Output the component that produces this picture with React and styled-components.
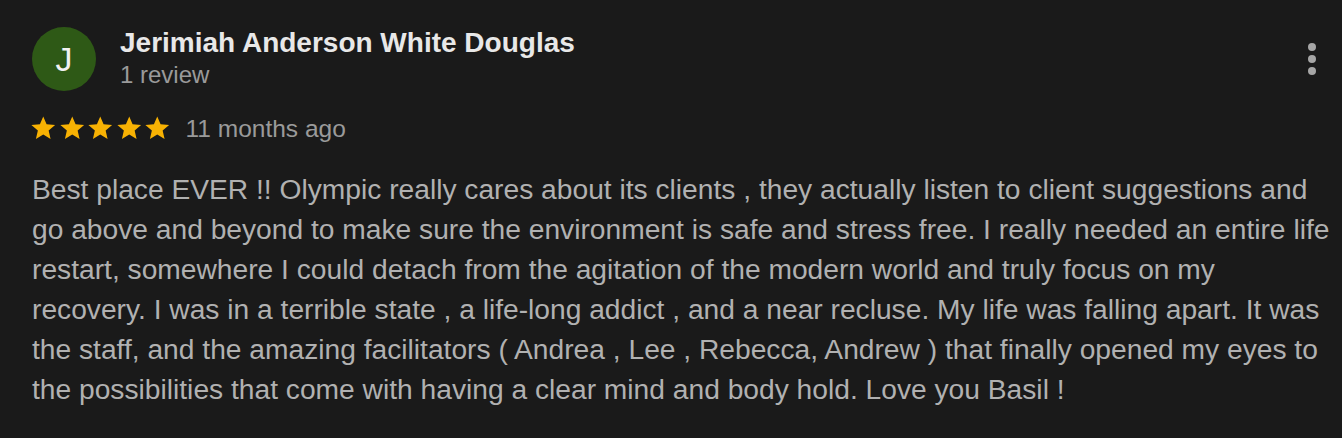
import React from "react";
import styled, { createGlobalStyle } from "styled-components";

const Global = createGlobalStyle`
  html, body { margin: 0; padding: 0; background: #1a1a1a; }
  body { font-family: "Liberation Sans", Arial, Helvetica, sans-serif; }
`;

const Card = styled.div`
  background: #1a1a1a;
  width: 1342px;
  height: 438px;
  box-sizing: border-box;
  padding: 27px 8px 0 32px;
`;

const Header = styled.div`
  display: flex;
  align-items: flex-start;
  margin-right: 18px;
`;

const Avatar = styled.div`
  width: 64px;
  height: 64px;
  border-radius: 50%;
  background: #2e5916;
  color: #f2f2f2;
  display: flex;
  align-items: center;
  justify-content: center;
  font-size: 34px;
  flex-shrink: 0;
`;

const Who = styled.div`
  margin-left: 24px;
  flex: 1;
`;

const Name = styled.div`
  font-size: 28px;
  font-weight: 700;
  color: #e8e8e8;
  line-height: 32px;
`;

const Sub = styled.div`
  font-size: 24px;
  color: #9a9a9a;
  line-height: 28px;
  margin-top: 2px;
`;

const MoreBtn = styled.button`
  background: none;
  border: none;
  padding: 0;
  margin-top: 16px;
  display: flex;
  flex-direction: column;
  gap: 4px;
  cursor: pointer;
`;

const Dot = styled.span`
  width: 8px;
  height: 8px;
  border-radius: 50%;
  background: #a6a6a6;
`;

const RatingRow = styled.div`
  display: flex;
  align-items: flex-start;
  margin-top: 22.5px;
  margin-left: -3px;
`;

const Stars = styled.div`
  display: flex;
`;

const StarSvg = styled.svg`
  width: 28.5px;
  height: 28.5px;
  display: block;
`;

const When = styled.span`
  font-size: 24.5px;
  line-height: 28px;
  padding-top: 1.5px;
  color: #9a9a9a;
  margin-left: 14px;
`;

const Body = styled.p`
  margin: 25.5px 0 0;
  font-size: 28.2px;
  line-height: 40px;
  color: #b1b1b1;
`;

const Star = () => (
  <StarSvg viewBox="0 0 24 24">
    <path
      fill="#f8b203"
      d="M12 17.27L18.18 21l-1.64-7.03L22 9.24l-7.19-.61L12 2 9.19 8.63 2 9.24l5.46 4.73L5.82 21z"
    />
  </StarSvg>
);

export default function App() {
  return (
    <>
      <Global />
      <Card>
        <Header>
          <Avatar>J</Avatar>
          <Who>
            <Name>Jerimiah Anderson White Douglas</Name>
            <Sub>1 review</Sub>
          </Who>
          <MoreBtn aria-label="More">
            <Dot />
            <Dot />
            <Dot />
          </MoreBtn>
        </Header>
        <RatingRow>
          <Stars>
            {[0, 1, 2, 3, 4].map((i) => (
              <Star key={i} />
            ))}
          </Stars>
          <When>11 months ago</When>
        </RatingRow>
        <Body>
          Best place EVER !! Olympic really cares about its clients , they actually listen to client suggestions and go above and beyond to make sure the environment is safe and stress free. I really needed an entire life restart, somewhere I could detach from the agitation of the modern world and truly focus on my recovery. I was in a terrible state , a life-long addict , and a near recluse. My life was falling apart. It was the staff, and the amazing facilitators ( Andrea , Lee , Rebecca, Andrew ) that finally opened my eyes to the possibilities that come with having a clear mind and body hold. Love you Basil !
        </Body>
      </Card>
    </>
  );
}
